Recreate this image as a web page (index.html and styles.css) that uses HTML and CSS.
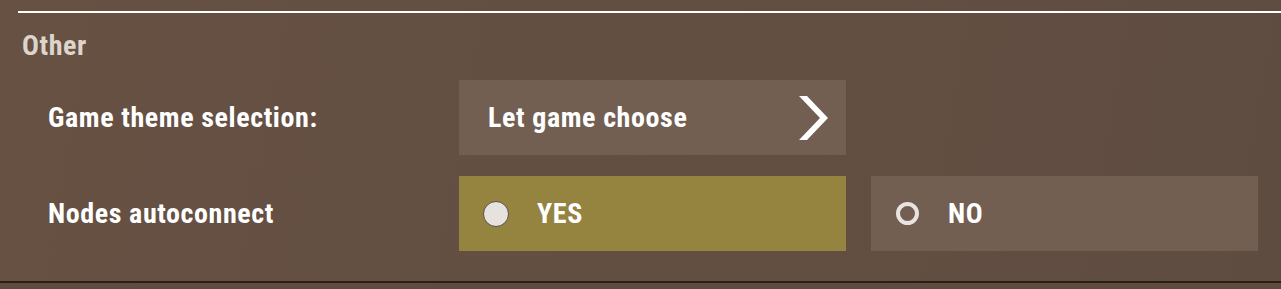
FILE: index.html
```html
<!DOCTYPE html>
<html lang="en">
<head>
    <meta charset="UTF-8">
    <meta name="viewport" content="width=device-width, initial-scale=1.0">
    <title>Settings</title>
    <link rel="stylesheet" href="styles.css">
</head>
<body>
    <div class="panel">
        <div class="divider"></div>

        <!-- Section title -->
        <h2 class="section-title">Other</h2>

        <!-- Theme selection row -->
        <div class="row">
            <span class="row-label">Game theme selection:</span>
            <div class="option select">
                <span>Let game choose</span>
                <svg class="chevron" width="29" height="44" viewBox="0 0 29 44">
                    <polygon points="0,0 8,0 29,22 8,44 0,44 21,22" fill="#ffffff"/>
                </svg>
            </div>
        </div>

        <!-- Autoconnect row -->
        <div class="row">
            <span class="row-label">Nodes autoconnect</span>
            <div class="choices">
                <div class="option active">
                    <span class="radio checked"></span>
                    <span>YES</span>
                </div>
                <div class="option">
                    <span class="radio"></span>
                    <span>NO</span>
                </div>
            </div>
        </div>
    </div>
    <div class="footer"></div>
</body>
</html>
```

FILE: styles.css
```css
body {
    font-family: "Roboto Condensed", Roboto, sans-serif;
    font-weight: 700;
    letter-spacing: 0.6px;
    margin: 0;
    background-color: #5f4b3f;
    color: #ffffff;
}
.panel {
    background: linear-gradient(100deg, #665143 0%, #634f42 50%, #5f4c40 100%);
    padding-top: 11px;
    padding-bottom: 30px;
    border-bottom: 2px solid #2b2019;
}
.divider {
    margin-left: 18px;
    height: 2px;
    background-color: #ffffff;
}
.section-title {
    margin: 17px 0 0 22px;
    font-size: 28px;
    line-height: 32px;
    font-weight: 700;
    color: #ddd5cc;
}
.row {
    display: flex;
    align-items: center;
    padding-left: 48px;
    margin-top: 21px;
}
.section-title + .row {
    margin-top: 18px;
}
.row-label {
    width: 411px;
    font-size: 28px;
}
.choices {
    display: flex;
    gap: 25px;
}
.option {
    width: 387px;
    height: 75px;
    box-sizing: border-box;
    display: flex;
    align-items: center;
    padding-left: 25px;
    background-color: #725f52;
    font-size: 28px;
}
.option.select {
    justify-content: space-between;
    padding-left: 29px;
    padding-right: 18px;
}
.option.active {
    background-color: #958340;
}
.radio {
    width: 23px;
    height: 23px;
    box-sizing: border-box;
    border: 4px solid #e8e4e0;
    border-radius: 50%;
    margin-right: 29px;
}
.radio.checked {
    width: 26px;
    height: 26px;
    border: 1px solid #5e4f3f;
    background-color: #e6e3df;
    margin-left: -1px;
    margin-right: 28px;
}
.footer {
    height: 4px;
}
```
